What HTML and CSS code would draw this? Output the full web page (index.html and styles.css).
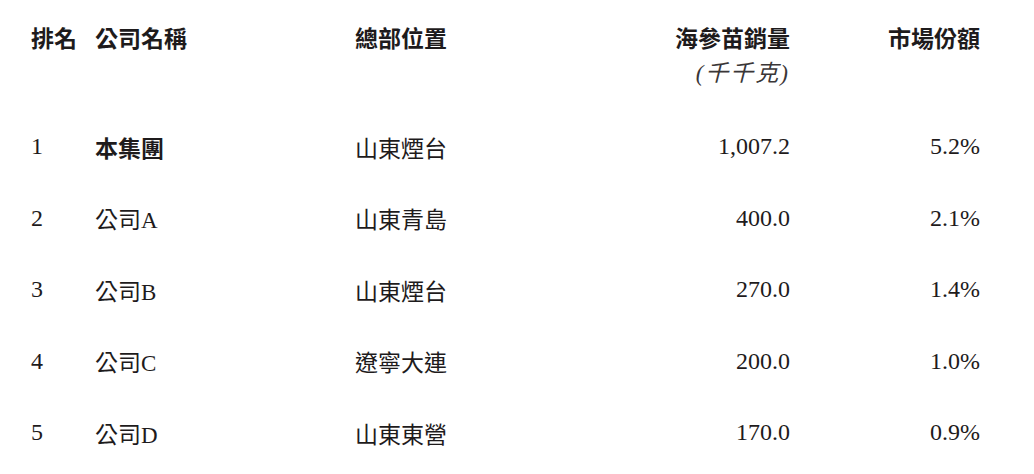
FILE: index.html
```html
<!DOCTYPE html>
<html lang="zh-Hant">
<head>
<meta charset="utf-8">
<title>海參苗銷量排名</title>
<link rel="stylesheet" href="styles.css">
</head>
<body>
<div class="table">
  <div class="row head">
    <div class="c rank">排名</div>
    <div class="c name">公司名稱</div>
    <div class="c loc">總部位置</div>
    <div class="c num">海參苗銷量<br><span class="unit">(千千克)</span></div>
    <div class="c pct">市場份額</div>
  </div>
  <div class="row">
    <div class="c rank">1</div>
    <div class="c name strong">本集團</div>
    <div class="c loc">山東煙台</div>
    <div class="c num">1,007.2</div>
    <div class="c pct">5.2%</div>
  </div>
  <div class="row">
    <div class="c rank">2</div>
    <div class="c name">公司A</div>
    <div class="c loc">山東青島</div>
    <div class="c num">400.0</div>
    <div class="c pct">2.1%</div>
  </div>
  <div class="row">
    <div class="c rank">3</div>
    <div class="c name">公司B</div>
    <div class="c loc">山東煙台</div>
    <div class="c num">270.0</div>
    <div class="c pct">1.4%</div>
  </div>
  <div class="row">
    <div class="c rank">4</div>
    <div class="c name">公司C</div>
    <div class="c loc">遼寧大連</div>
    <div class="c num">200.0</div>
    <div class="c pct">1.0%</div>
  </div>
  <div class="row">
    <div class="c rank">5</div>
    <div class="c name">公司D</div>
    <div class="c loc">山東東營</div>
    <div class="c num">170.0</div>
    <div class="c pct">0.9%</div>
  </div>
</div>
</body>
</html>
```
FILE: styles.css
```css
html, body {
  margin: 0;
  padding: 0;
  background: #ffffff;
}
body {
  font-family: "Liberation Serif", "Noto Sans CJK TC", serif;
  font-size: 23px;
  color: #1e1b1c;
}
.table {
  padding-left: 31px;
  width: 949px;
}
.row {
  display: grid;
  grid-template-columns: 64px 260px 240px 195px 190px;
  height: 71.5px;
  align-items: center;
}
.row.head {
  height: auto;
  align-items: start;
  padding-top: 23px;
  padding-bottom: 20px;
  line-height: 34px;
  font-weight: bold;
}
.num, .pct {
  text-align: right;
  font-size: 24px;
}
.head .num, .head .pct {
  font-size: 23px;
}
.unit {
  font-weight: normal;
  font-style: italic;
  letter-spacing: 2px;
  color: #3a3637;
}
.rank {
  font-size: 24px;
}
.head .rank {
  font-size: 23px;
}
.strong {
  font-weight: bold;
}
```
